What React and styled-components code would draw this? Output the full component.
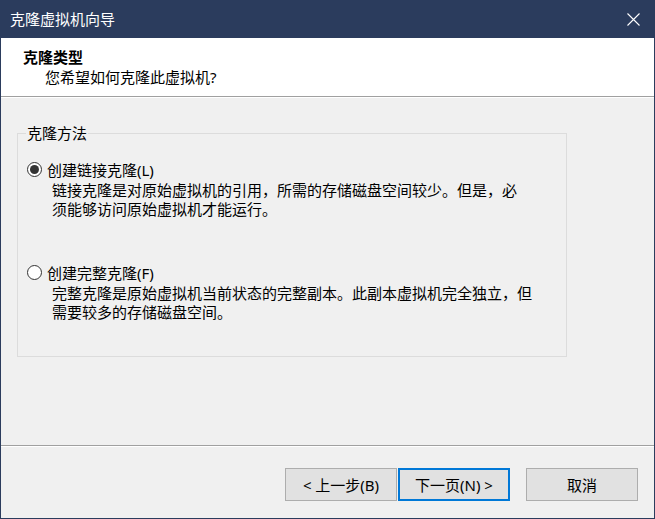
import React from "react";
import styled, { createGlobalStyle } from "styled-components";

const Global = createGlobalStyle`
  html, body { margin: 0; padding: 0; background: #f0f0f0; overflow: hidden; }
  * { box-sizing: border-box; }
`;

const FONT = `"Noto Sans", "Noto Sans CJK SC", sans-serif`;
const CJK = `"Noto Sans CJK SC", sans-serif`;

const Window = styled.div`
  width: 655px;
  height: 519px;
  border: 1px solid #2b3c5d;
  border-top: none;
  background: #f0f0f0;
  display: flex;
  flex-direction: column;
  font-family: ${FONT};
  font-size: 15px;
  color: #000;
`;

const TitleBar = styled.div`
  height: 38px;
  flex: none;
  background: #2b3c5d;
  color: #fff;
  display: flex;
  align-items: center;
  justify-content: space-between;
  padding: 0 14px 0 9px;
  line-height: 20px;
`;

const CloseIcon = styled.svg`
  width: 13px;
  height: 13px;
  display: block;
`;

const Header = styled.div`
  background: #fff;
  height: 58px;
  flex: none;
  padding-top: 9px;
  line-height: 20px;
`;

const HeaderTitle = styled.div`
  font-weight: bold;
  padding-left: 22px;
`;

const HeaderSub = styled.div`
  padding-left: 44px;
`;

const Separator = styled.div`
  height: 2px;
  flex: none;
  border-top: 1px solid #a0a0a0;
  border-bottom: 1px solid #ffffff;
`;

const Content = styled.div`
  flex: 1;
  padding: 25px 0 0 16px;
`;

const GroupBox = styled.fieldset`
  margin: 0;
  width: 550px;
  height: 234px;
  border: 1px solid #dcdcdc;
  padding: 16px 0 0 9px;
`;

const Legend = styled.legend`
  margin-left: -1px;
  padding: 0 1px;
  line-height: 20px;
`;

const Option = styled.div`
  margin-top: ${(p) => p.$gap}px;
`;

const RadioRow = styled.label`
  display: flex;
  align-items: center;
  height: 20px;
  gap: 5px;
`;

const RadioCircle = styled.span`
  width: 15px;
  height: 15px;
  border-radius: 50%;
  border: 1px solid #333;
  background: #fff;
  display: flex;
  align-items: center;
  justify-content: center;
  flex: none;
  &::after {
    content: "";
    width: 9px;
    height: 9px;
    border-radius: 50%;
    background: ${(p) => (p.$checked ? "#333" : "transparent")};
  }
`;

const Desc = styled.div`
  margin: 1px 0 0 25px;
  font-family: ${CJK};
  line-height: 19px;
  white-space: nowrap;
`;

const Footer = styled.div`
  height: 71px;
  flex: none;
  display: flex;
  justify-content: flex-end;
  align-items: flex-start;
  padding: 21px 16px 0 0;
`;

const Button = styled.button`
  width: 112px;
  height: 33px;
  margin-left: ${(p) => p.$gap}px;
  background: #e1e1e1;
  border: ${(p) => (p.$default ? "2px solid #0078d7" : "1px solid #adadad")};
  font-family: ${FONT};
  font-size: 15px;
  color: #000;
  padding: 0;
  line-height: 20px;
`;

export default function App() {
  return (
    <>
      <Global />
      <Window lang="zh-CN">
        <TitleBar>
          <span>克隆虚拟机向导</span>
          <CloseIcon viewBox="0 0 13 13">
            <path d="M0.5 0.5 L12.5 12.5 M12.5 0.5 L0.5 12.5" stroke="#fff" strokeWidth="1.1" fill="none" />
          </CloseIcon>
        </TitleBar>
        <Header>
          <HeaderTitle>克隆类型</HeaderTitle>
          <HeaderSub>您希望如何克隆此虚拟机?</HeaderSub>
        </Header>
        <Separator />
        <Content>
          <GroupBox>
            <Legend>克隆方法</Legend>
            <Option $gap={0}>
              <RadioRow>
                <RadioCircle $checked />
                <span>创建链接克隆(L)</span>
              </RadioRow>
              <Desc>
                链接克隆是对原始虚拟机的引用，所需的存储磁盘空间较少。但是，必
                <br />
                须能够访问原始虚拟机才能运行。
              </Desc>
            </Option>
            <Option $gap={44}>
              <RadioRow>
                <RadioCircle />
                <span>创建完整克隆(F)</span>
              </RadioRow>
              <Desc>
                完整克隆是原始虚拟机当前状态的完整副本。此副本虚拟机完全独立，但
                <br />
                需要较多的存储磁盘空间。
              </Desc>
            </Option>
          </GroupBox>
        </Content>
        <Separator />
        <Footer>
          <Button $gap={0}>&lt; 上一步(B)</Button>
          <Button $gap={1} $default>下一页(N) &gt;</Button>
          <Button $gap={16}>取消</Button>
        </Footer>
      </Window>
    </>
  );
}
